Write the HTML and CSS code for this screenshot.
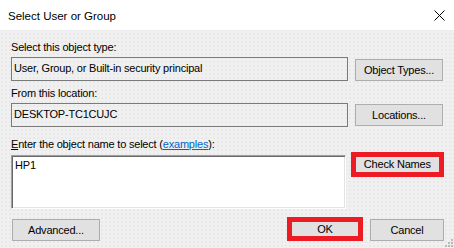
FILE: index.html
```html
<!DOCTYPE html>
<html>
<head>
<meta charset="utf-8">
<link rel="stylesheet" href="styles.css">
</head>
<body>
<div class="dialog">
  <div class="titlebar">
    <span class="title">Select User or Group</span>
    <svg class="close" width="11" height="11" viewBox="0 0 11 11"><path d="M0.5 0.5 L10.5 10.5 M10.5 0.5 L0.5 10.5" stroke="#000" stroke-width="1" fill="none"/></svg>
  </div>
  <div class="body">
    <div class="label l1">Select this object type:</div>
    <div class="row r1">
      <div class="field">User, Group, or Built-in security principal</div>
      <div class="btn side b1">Object Types...</div>
    </div>
    <div class="label l2">From this location:</div>
    <div class="row r2">
      <div class="field">DESKTOP-TC1CUJC</div>
      <div class="btn side b2">Locations...</div>
    </div>
    <div class="label l3"><u>E</u>nter the object name to select (<a class="link">examples</a>):</div>
    <div class="row r3">
      <div class="area">HP1</div>
      <div class="hl check">Check Names</div>
    </div>
    <div class="row bottom">
      <div class="btn adv">Advanced...</div>
      <div class="spacer"></div>
      <div class="hl ok">OK</div>
      <div class="btn cancel">Cancel</div>
    </div>
  </div>
  <svg class="grip" width="8" height="8" viewBox="0 0 8 8">
    <rect x="6" y="0" width="2" height="2" fill="#b8b8b8"/>
    <rect x="3" y="3" width="2" height="2" fill="#b8b8b8"/>
    <rect x="6" y="3" width="2" height="2" fill="#b8b8b8"/>
    <rect x="0" y="6" width="2" height="2" fill="#b8b8b8"/>
    <rect x="3" y="6" width="2" height="2" fill="#b8b8b8"/>
    <rect x="6" y="6" width="2" height="2" fill="#b8b8b8"/>
  </svg>
</div>
</body>
</html>
```

FILE: styles.css
```css
html, body {
  margin: 0;
  padding: 0;
}
body {
  width: 454px;
  height: 248px;
  overflow: hidden;
  font-family: "Liberation Sans", Arial, sans-serif;
  font-size: 11px;
  line-height: 13px;
  letter-spacing: -0.2px;
  color: #000;
}
.dialog {
  position: relative;
  width: 454px;
  height: 248px;
  background-color: #f0f0f0;
  background-image: radial-gradient(circle, #e4e4e4 0.6px, transparent 0.9px);
  background-size: 4px 4px;
}
.titlebar {
  height: 30px;
  background: #fff;
  display: flex;
  align-items: center;
  justify-content: space-between;
  padding: 0 9px 0 8px;
}
.title {
  font-size: 11.5px;
  line-height: 14px;
  letter-spacing: 0;
  margin-top: 2px;
}
.body {
  padding: 11px 10px 0 11px;
}
.label {
  height: 13px;
  white-space: nowrap;
}
.l1 { margin-bottom: 3px; }
.l2 { margin-top: 6px; margin-bottom: 3px; }
.l3 { margin-top: 11px; margin-bottom: 4px; }
.row {
  display: flex;
  align-items: flex-start;
}
.field {
  box-sizing: border-box;
  width: 337px;
  height: 24px;
  border: 1px solid #7a7a7a;
  padding: 4px 2px 0 2px;
  white-space: nowrap;
}
.btn {
  box-sizing: border-box;
  height: 22px;
  background: #e1e1e1;
  border: 1px solid #adadad;
  display: flex;
  align-items: center;
  justify-content: center;
  white-space: nowrap;
}
.side {
  width: 88px;
  margin-left: 7px;
}
.b1 { margin-top: 2px; }
.b2 { margin-top: 1px; }
.area {
  box-sizing: border-box;
  width: 337px;
  height: 54px;
  background: #fff;
  border-top: 1px solid #a0a0a0;
  border-left: 1px solid #a0a0a0;
  border-right: 1px solid #fff;
  border-bottom: 1px solid #fff;
  box-shadow: inset 1px 1px 0 #696969, inset -1px -1px 0 #e3e3e3;
  padding: 3px 3px 0 3px;
}
.hl {
  box-sizing: border-box;
  border: 5px solid #ed1c24;
  background: #e1e1e1;
  display: flex;
  align-items: center;
  justify-content: center;
  white-space: nowrap;
}
.check {
  width: 94px;
  height: 25px;
  margin-left: 5px;
  margin-top: -3px;
}
.bottom {
  margin-top: 8px;
}
.adv {
  width: 88px;
  margin-top: 2px;
  margin-left: 1px;
}
.spacer {
  flex: 1;
}
.ok {
  width: 76px;
  height: 24px;
}
.cancel {
  width: 74px;
  margin-left: 7px;
  margin-top: 2px;
}
.link {
  color: #0066cc;
  text-decoration: underline;
}
.grip {
  position: absolute;
  right: 1px;
  bottom: 1px;
}
```
